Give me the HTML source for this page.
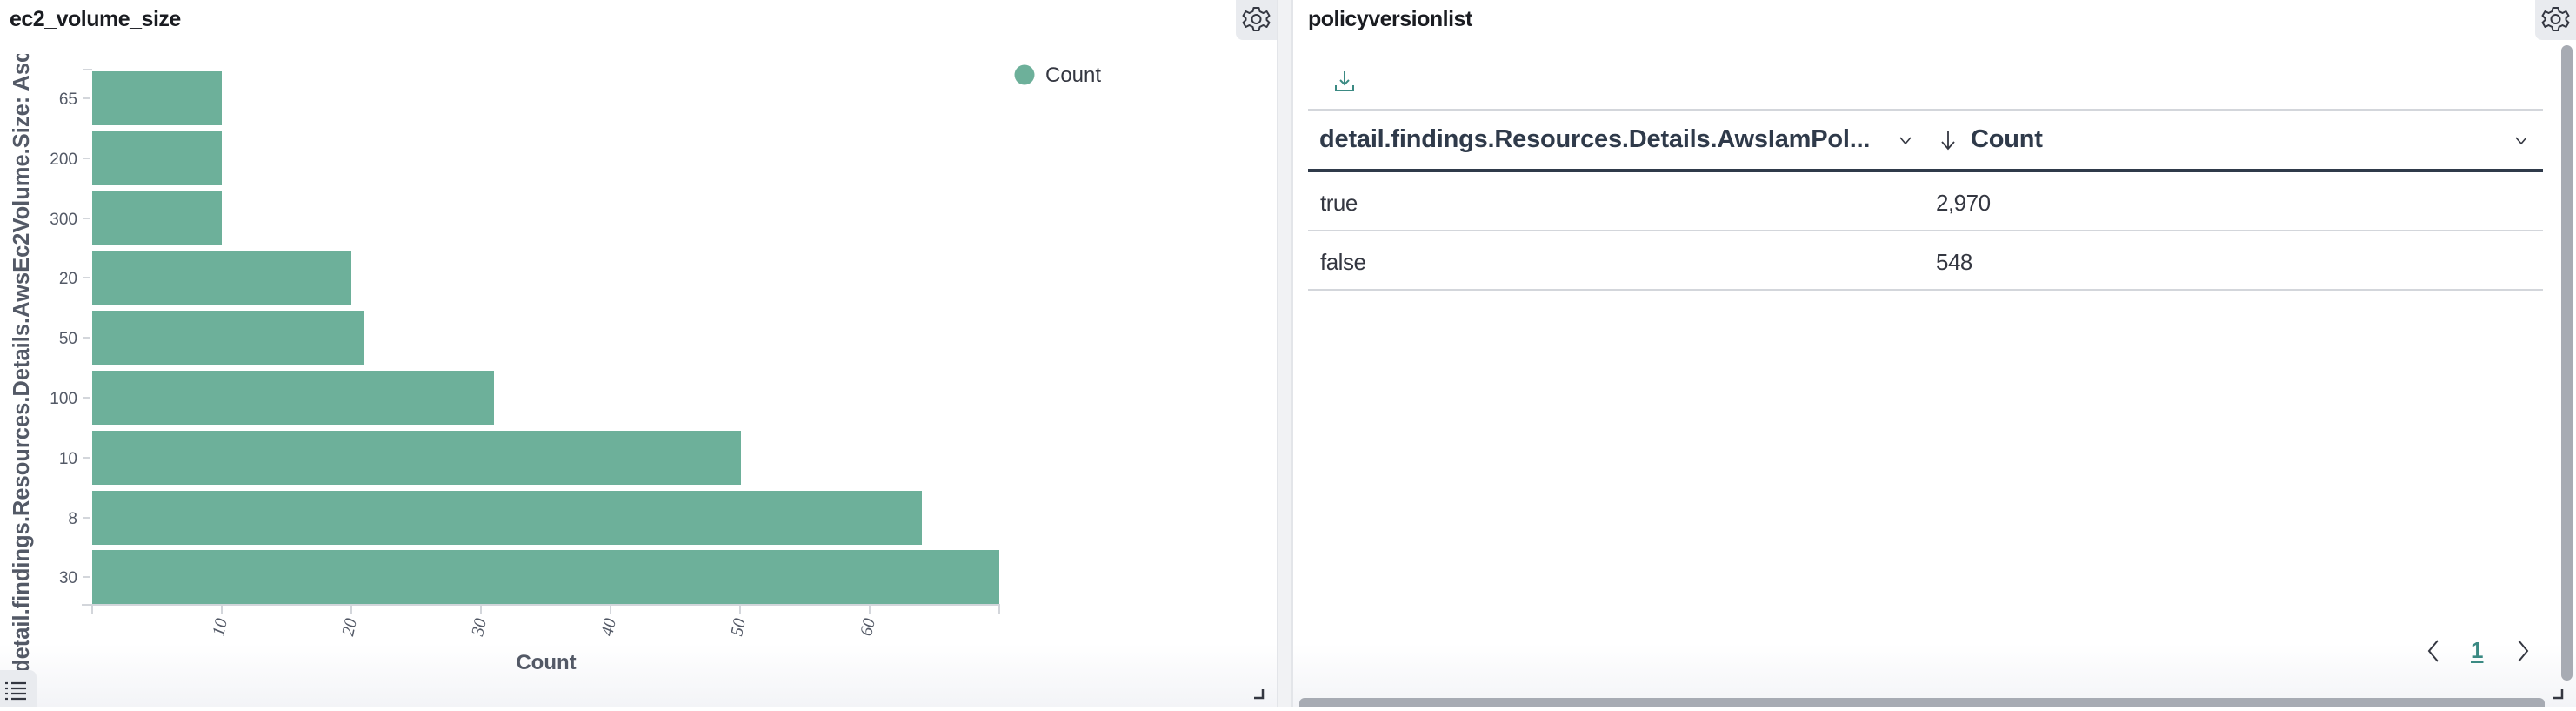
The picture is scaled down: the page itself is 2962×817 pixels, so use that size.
<!DOCTYPE html>
<html><head><meta charset="utf-8">
<style>
*{margin:0;padding:0;box-sizing:border-box}
body{width:2962px;height:812px;overflow:hidden;background:#fff;font-family:"Liberation Sans",sans-serif;position:relative;color:#343741}
.abs{position:absolute}
.title{font-weight:bold;font-size:25px;color:#1a1c21;letter-spacing:-0.5px}
.gear{background:#e9ebef;border-radius:0 0 0 8px;width:47px;height:46px}
.hdr{font-weight:bold;font-size:29px;color:#2f3a4a;letter-spacing:-0.2px;white-space:nowrap}
.cell{font-size:26px;color:#343741;letter-spacing:-0.5px}
</style></head><body>
<div class="abs" style="left:0;top:740px;width:1468px;height:72px;background:linear-gradient(#fff,#f3f4f7)"></div>
<div class="abs" style="left:1487px;top:740px;width:1475px;height:72px;background:linear-gradient(#fff,#f3f4f7)"></div>
<div class="abs" style="left:1468px;top:0;width:19px;height:812px;background:#f1f2f4;border-left:2px solid #e3e5e9;border-right:2px solid #e3e5e9"></div>

<div class="abs title" style="left:11px;top:8px">ec2_volume_size</div>
<div class="abs gear" style="left:1421px;top:0">
<svg width="47" height="46" viewBox="0 0 47 46"><g transform="translate(23.5,22)" fill="none" stroke="#343741" stroke-width="2"><path d="M-3,-13 L3,-13 L4,-9 L8,-7 L12,-9 L15,-4 L12,-1 L12,1 L15,4 L12,9 L8,7 L4,9 L3,13 L-3,13 L-4,9 L-8,7 L-12,9 L-15,4 L-12,1 L-12,-1 L-15,-4 L-12,-9 L-8,-7 L-4,-9 Z" stroke-linejoin="round"/><circle r="5"/></g></svg></div>

<svg class="abs" style="left:0;top:0" width="1468" height="812">
<defs><clipPath id="yc"><rect x="0" y="62" width="60" height="712"/></clipPath></defs>
<g fill="#6db09a">
<rect x="106" y="82" width="149" height="62"/>
<rect x="106" y="151" width="149" height="62"/>
<rect x="106" y="220" width="149" height="62"/>
<rect x="106" y="288" width="298" height="62"/>
<rect x="106" y="357" width="313" height="62"/>
<rect x="106" y="426" width="462" height="62"/>
<rect x="106" y="495" width="746" height="62"/>
<rect x="106" y="564" width="954" height="62"/>
<rect x="106" y="632" width="1043" height="62"/>
</g>
<g stroke="#d3d6db" stroke-width="2">
<line x1="94" y1="695" x2="1150" y2="695"/>
<line x1="96" y1="80" x2="106" y2="80"/>
<line x1="106" y1="695" x2="106" y2="706"/><line x1="255" y1="695" x2="255" y2="706"/><line x1="404" y1="695" x2="404" y2="706"/><line x1="553" y1="695" x2="553" y2="706"/><line x1="702" y1="695" x2="702" y2="706"/><line x1="851" y1="695" x2="851" y2="706"/><line x1="1000" y1="695" x2="1000" y2="706"/><line x1="1149" y1="695" x2="1149" y2="706"/>
<line x1="96" y1="113" x2="104" y2="113"/><line x1="96" y1="182" x2="104" y2="182"/><line x1="96" y1="251" x2="104" y2="251"/><line x1="96" y1="319" x2="104" y2="319"/><line x1="96" y1="388" x2="104" y2="388"/><line x1="96" y1="457" x2="104" y2="457"/><line x1="96" y1="526" x2="104" y2="526"/><line x1="96" y1="595" x2="104" y2="595"/><line x1="96" y1="663" x2="104" y2="663"/>
</g>
<g font-family="Liberation Sans,sans-serif" font-size="19" fill="#535966" text-anchor="end">
<text x="89" y="120">65</text><text x="89" y="189">200</text><text x="89" y="258">300</text><text x="89" y="326">20</text><text x="89" y="395">50</text><text x="89" y="464">100</text><text x="89" y="533">10</text><text x="89" y="602">8</text><text x="89" y="670">30</text>
</g>
<g font-family="Liberation Serif,serif" font-style="italic" font-size="20" fill="#535966" text-anchor="middle">
<text transform="translate(259,722) rotate(-78)">10</text>
<text transform="translate(408,722) rotate(-78)">20</text>
<text transform="translate(557,722) rotate(-78)">30</text>
<text transform="translate(706,722) rotate(-78)">40</text>
<text transform="translate(855,722) rotate(-78)">50</text>
<text transform="translate(1004,722) rotate(-78)">60</text>
</g>
<text x="628" y="769" text-anchor="middle" font-family="Liberation Sans,sans-serif" font-weight="bold" font-size="24" fill="#535966">Count</text>
<circle cx="1178" cy="86" r="11.5" fill="#6db09a"/>
<text x="1202" y="94" font-family="Liberation Sans,sans-serif" font-size="24" fill="#343741">Count</text>
<g clip-path="url(#yc)">
<text transform="translate(33,773) rotate(-90)" font-family="Liberation Sans,sans-serif" font-weight="bold" font-size="25.5" fill="#535966">detail.findings.Resources.Details.AwsEc2Volume.Size: Ascending</text>
</g>
</svg>
<div class="abs" style="left:0;top:770px;width:42px;height:42px;background:#e9ebef;border-radius:0 8px 0 0">
<svg width="42" height="42"><g stroke="#343741" stroke-width="2.2"><line x1="6" y1="15" x2="9" y2="15"/><line x1="13" y1="15" x2="30" y2="15"/><line x1="6" y1="21" x2="9" y2="21"/><line x1="13" y1="21" x2="30" y2="21"/><line x1="6" y1="27" x2="9" y2="27"/><line x1="13" y1="27" x2="30" y2="27"/><line x1="6" y1="33" x2="9" y2="33"/><line x1="13" y1="33" x2="30" y2="33"/></g></svg></div>
<svg class="abs" style="left:1440px;top:790px" width="14" height="14"><path d="M2,12 H12 V2" fill="none" stroke="#343741" stroke-width="2.5"/></svg>

<div class="abs title" style="left:1504px;top:8px">policyversionlist</div>
<div class="abs gear" style="left:2915px;top:0">
<svg width="47" height="46" viewBox="0 0 47 46"><g transform="translate(23.5,22)" fill="none" stroke="#343741" stroke-width="2"><path d="M-3,-13 L3,-13 L4,-9 L8,-7 L12,-9 L15,-4 L12,-1 L12,1 L15,4 L12,9 L8,7 L4,9 L3,13 L-3,13 L-4,9 L-8,7 L-12,9 L-15,4 L-12,1 L-12,-1 L-15,-4 L-12,-9 L-8,-7 L-4,-9 Z" stroke-linejoin="round"/><circle r="5"/></g></svg></div>
<div class="abs" style="left:2945px;top:52px;width:13px;height:730px;background:#a7abb3;border-radius:7px"></div>
<div class="abs" style="left:1494px;top:802px;width:1432px;height:10px;background:#a7abb3;border-radius:6px 6px 0 0"></div>
<svg class="abs" style="left:2934px;top:790px" width="14" height="14"><path d="M2,12 H12 V2" fill="none" stroke="#343741" stroke-width="2.5"/></svg>

<svg class="abs" style="left:1533px;top:80px" width="28" height="28"><g fill="none" stroke="#3b8a83" stroke-width="2"><path d="M13,2 V17 M8,12 L13,17 L18,12"/><path d="M3,18 V24 H23 V18"/></g></svg>

<div class="abs" style="left:1504px;top:125px;width:1420px;height:2px;background:#d3d6db"></div>
<div class="abs hdr" style="left:1517px;top:144px">detail.findings.Resources.Details.AwsIamPol...</div>
<svg class="abs" style="left:2183px;top:156px" width="16" height="12"><path d="M2,2 L8,9 L14,2" fill="none" stroke="#343741" stroke-width="1.6"/></svg>
<svg class="abs" style="left:2231px;top:148px" width="18" height="26"><path d="M9,2 V23 M2,15 L9,23 L16,15" fill="none" stroke="#343741" stroke-width="1.8"/></svg>
<div class="abs hdr" style="left:2266px;top:144px">Count</div>
<svg class="abs" style="left:2891px;top:156px" width="16" height="12"><path d="M2,2 L8,9 L14,2" fill="none" stroke="#343741" stroke-width="1.6"/></svg>
<div class="abs" style="left:1504px;top:194px;width:1420px;height:4px;background:#2f3a4a"></div>

<div class="abs cell" style="left:1518px;top:218px">true</div>
<div class="abs cell" style="left:2226px;top:218px">2,970</div>
<div class="abs" style="left:1504px;top:264px;width:1420px;height:2px;background:#d3d6db"></div>
<div class="abs cell" style="left:1518px;top:286px">false</div>
<div class="abs cell" style="left:2226px;top:286px">548</div>
<div class="abs" style="left:1504px;top:332px;width:1420px;height:2px;background:#d3d6db"></div>

<svg class="abs" style="left:2790px;top:734px" width="16" height="28"><path d="M13,2 L3,14 L13,26" fill="none" stroke="#343741" stroke-width="2"/></svg>
<div class="abs" style="left:2841px;top:732px;font-weight:bold;font-size:26px;color:#3b8a83;text-decoration:underline;text-underline-offset:4px">1</div>
<svg class="abs" style="left:2893px;top:734px" width="16" height="28"><path d="M3,2 L13,14 L3,26" fill="none" stroke="#343741" stroke-width="2"/></svg>
</body></html>
